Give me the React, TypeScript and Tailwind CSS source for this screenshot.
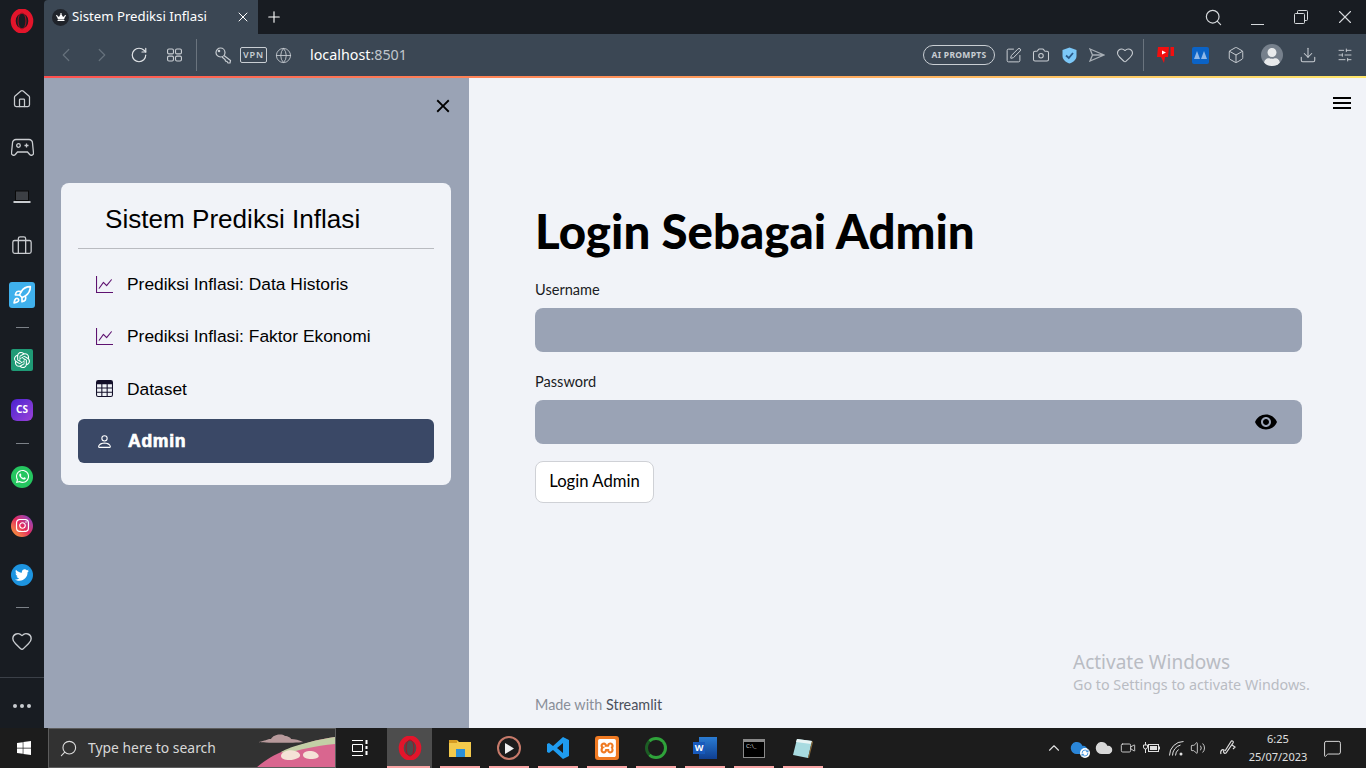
import type { ReactNode } from "react";
import {
  Home,
  Briefcase,
  Rocket,
  Heart,
  ChevronLeft,
  ChevronRight,
  RotateCw,
  Globe,
  Search,
  X,
  Plus,
  Camera,
  Box,
  Download,
  SlidersHorizontal,
  SquarePen,
  ChevronUp,
  Cloud,
  RefreshCw,
  Video,
  Volume2,
  MessageSquare,
} from "lucide-react";
import { BsGraphUp, BsTable, BsPerson } from "react-icons/bs";
import { MdClose, MdMenu, MdVisibility } from "react-icons/md";
import { FaWindows, FaWhatsapp, FaInstagram, FaTwitter, FaUser, FaCrown } from "react-icons/fa";
import { SiOpenai, SiXampp } from "react-icons/si";

const OperaLogo = ({ size = 22 }: { size?: number }) => (
  <svg width={size} height={size} viewBox="0 0 24 24">
    <ellipse cx="12" cy="12" rx="8.8" ry="10" fill="none" stroke="#e3152b" strokeWidth="5" />
    <ellipse cx="12" cy="12" rx="4" ry="8" fill="none" stroke="#a70f20" strokeWidth="1" />
  </svg>
);

const RailDash = () => (
  <div className="h-[16px] flex items-center justify-center">
    <div className="w-[13px] h-px bg-[#7c8188]" />
  </div>
);

const RailItem = ({ children }: { children: ReactNode }) => (
  <div className="h-[49px] flex items-center justify-center text-[#c9ccd0]">{children}</div>
);

const Rail = () => (
  <aside className="w-[44px] shrink-0 bg-[#181c22] flex flex-col">
    <div className="h-[74px] pt-[9px] flex justify-center items-start">
      <OperaLogo size={24} />
    </div>
    <RailItem>
      <Home size={20} strokeWidth={1.5} />
    </RailItem>
    <RailItem>
      <svg width="23" height="20" viewBox="0 0 23 20" fill="none" stroke="currentColor" strokeWidth="1.3">
        <path d="M5 1.500h13a3.500 3.500 0 0 1 3.500 3.500l1 10c.2 2-2.500 3-3.800 1.500L16.500 14h-10l-2.200 2.500C3 18 .3 17 .5 15l1-10A3.500 3.500 0 0 1 5 1.500z" />
        <circle cx="7.500" cy="7.500" r="1.800" />
        <path d="M13.500 7.500h4M15.500 5.500v4" />
      </svg>
    </RailItem>
    <RailItem>
      <svg width="18" height="14" viewBox="0 0 18 14">
        <rect x="2.500" y="1" width="13" height="9.500" fill="#3c3f44" stroke="#0a0a0a" />
        <rect x="0.500" y="11" width="17" height="2" fill="#c9ccd0" />
      </svg>
    </RailItem>
    <RailItem>
      <Briefcase size={22} strokeWidth={1.4} />
    </RailItem>
    <RailItem>
      <div className="w-[26px] h-[26px] rounded-[3px] bg-[#3fb0ec] flex items-center justify-center text-white">
        <Rocket size={20} strokeWidth={2} />
      </div>
    </RailItem>
    <RailDash />
    <RailItem>
      <div className="w-[22px] h-[22px] rounded-[2px] bg-[#1f9a76] flex items-center justify-center text-white">
        <SiOpenai size={16} />
      </div>
    </RailItem>
    <div className="h-px" />
    <RailItem>
      <div className="w-[22px] h-[22px] rounded-[6px] bg-gradient-to-br from-[#4a1fd0] to-[#9b3fd8] flex items-center justify-center text-white text-[10px] font-bold font-['Noto_Sans',sans-serif]">
        CS
      </div>
    </RailItem>
    <div className="h-[18px] flex items-center justify-center">
      <div className="w-[13px] h-px bg-[#7c8188]" />
    </div>
    <RailItem>
      <div className="w-[22px] h-[22px] rounded-full bg-[#25c660] flex items-center justify-center text-white">
        <FaWhatsapp size={15} />
      </div>
    </RailItem>
    <RailItem>
      <div className="w-[22px] h-[22px] rounded-full bg-gradient-to-tr from-[#f9a51a] via-[#e4245c] to-[#7b2fd0] flex items-center justify-center text-white">
        <FaInstagram size={15} />
      </div>
    </RailItem>
    <RailItem>
      <div className="w-[22px] h-[22px] rounded-full bg-[#1d94e0] flex items-center justify-center text-white">
        <FaTwitter size={14} />
      </div>
    </RailItem>
    <RailDash />
    <div className="h-px" />
    <RailItem>
      <Heart size={22} strokeWidth={1.5} />
    </RailItem>
    <div className="mt-auto border-t border-[#3b4048] h-[51px] pt-[6px] flex items-center justify-center gap-[3px]">
      <span className="w-[4px] h-[4px] rounded-full bg-[#c9ccd0]" />
      <span className="w-[4px] h-[4px] rounded-full bg-[#c9ccd0]" />
      <span className="w-[4px] h-[4px] rounded-full bg-[#c9ccd0]" />
    </div>
  </aside>
);

const TabBar = () => (
  <div className="h-[34px] bg-[#181c22] flex text-white font-['Noto_Sans',sans-serif]">
    <div className="w-[214px] bg-[#3b4754] rounded-tl-[4px] flex items-center pl-[8px] pr-[7px]">
      <div className="w-[17px] h-[17px] rounded-full bg-[#20242b] flex items-center justify-center mr-[3px] shrink-0">
        <FaCrown size={10} />
      </div>
      <span className="text-[13.200px] whitespace-nowrap">Sistem Prediksi Inflasi</span>
      <X size={16} strokeWidth={1.5} className="ml-auto" />
    </div>
    <div className="w-[32px] flex items-center justify-center">
      <Plus size={18} strokeWidth={1.5} />
    </div>
    <div className="ml-auto flex items-center text-[#d5d8dc]">
      <div className="w-[44px] flex justify-center">
        <Search size={19} strokeWidth={1.5} />
      </div>
      <div className="w-[44px] flex justify-center pt-[14px]">
        <div className="w-[13px] h-px bg-[#d5d8dc]" />
      </div>
      <div className="w-[44px] flex justify-center">
        <svg width="14" height="14" viewBox="0 0 14 14" fill="none" stroke="currentColor">
          <rect x="0.500" y="3.500" width="10" height="10" rx="1" />
          <path d="M3.500 3V1.500a1 1 0 0 1 1-1h8a1 1 0 0 1 1 1v8a1 1 0 0 1-1 1H11" />
        </svg>
      </div>
      <div className="w-[43px] flex justify-center">
        <X size={22} strokeWidth={1.2} />
      </div>
    </div>
  </div>
);

const ToolIcon = ({ w = 28, children }: { w?: number; children: ReactNode }) => (
  <div style={{ width: w }} className="flex items-center justify-center shrink-0">
    {children}
  </div>
);

const Toolbar = () => (
  <div className="h-[42px] bg-[#3b4754] flex items-center text-[#c9ced3] font-['Noto_Sans',sans-serif]">
    <div className="w-[4px]" />
    <ToolIcon w={36}>
      <ChevronLeft size={22} strokeWidth={1.3} className="text-[#66717c]" />
    </ToolIcon>
    <ToolIcon w={36}>
      <ChevronRight size={22} strokeWidth={1.3} className="text-[#66717c]" />
    </ToolIcon>
    <ToolIcon w={37}>
      <RotateCw size={18} strokeWidth={1.6} className="text-[#dfe2e5]" />
    </ToolIcon>
    <ToolIcon w={34}>
      <svg width="15" height="14" viewBox="0 0 16 14" fill="none" stroke="currentColor" strokeWidth="1.2">
        <rect x="0.600" y="0.600" width="6.300" height="5.200" rx="1.500" />
        <rect x="9.100" y="0.600" width="6.300" height="5.200" rx="1.500" />
        <rect x="0.600" y="8.200" width="6.300" height="5.200" rx="1.500" />
        <rect x="9.100" y="8.200" width="6.300" height="5.200" rx="1.500" />
      </svg>
    </ToolIcon>
    <div className="w-px h-[32px] bg-[#6a747e] ml-[5px] mr-[14px]" />
    <ToolIcon w={24}>
      <svg width="17" height="17" viewBox="0 0 17 17" fill="none" stroke="currentColor" strokeWidth="1.2">
        <circle cx="5.500" cy="5.500" r="4.500" />
        <path d="M9 8.500l6.500 5-.5 2.500h-2l-1-1.500-1.500-.5-.5-1.500-3-2.500" />
        <circle cx="4" cy="4" r=".7" />
      </svg>
    </ToolIcon>
    <div className="w-[27px] h-[16px] ml-[5px] border border-[#c9ced3] rounded-[2px] flex items-center justify-center text-[9px] font-semibold tracking-[0.8px]">
      VPN
    </div>
    <ToolIcon w={32}>
      <Globe size={17} strokeWidth={1.2} />
    </ToolIcon>
    <div className="ml-[11px] text-[14.300px] text-white">
      localhost<span className="text-[#c0c6cc]">:8501</span>
    </div>
    <div className="ml-auto flex items-center">
      <div className="w-[72px] h-[20px] rounded-full border border-[#c9ced3] flex items-center justify-center text-[8.500px] font-bold tracking-[0.3px] mr-[4px]">
        AI PROMPTS
      </div>
      <ToolIcon>
        <SquarePen size={17} strokeWidth={1.4} />
      </ToolIcon>
      <ToolIcon>
        <Camera size={18} strokeWidth={1.4} />
      </ToolIcon>
      <ToolIcon>
        <svg width="15" height="17" viewBox="0 0 15 17">
          <path d="M7.500 0.500 14.500 3v6c0 3.500-3 6.200-7 7.500C3.500 15.200.5 12.500.5 9V3z" fill="#7cc8f8" />
          <path d="M4 8.500 6.800 11 11 6" fill="none" stroke="#2b5a88" strokeWidth="1.800" />
        </svg>
      </ToolIcon>
      <ToolIcon>
        <svg width="16" height="14" viewBox="0 0 16 14" fill="none" stroke="#a8afb6" strokeWidth="1.300">
          <path d="M1 1l14 6-14 6 2.500-6zM3.500 7H15" />
        </svg>
      </ToolIcon>
      <ToolIcon>
        <Heart size={18} strokeWidth={1.4} />
      </ToolIcon>
      <div className="w-px h-[32px] bg-[#6a747e] ml-[4px] mr-[4px]" />
      <ToolIcon w={35}>
        <svg width="18" height="18" viewBox="0 0 18 18">
          <path d="M1 1h11l-1 10H8l-1 6-3-6H0z" fill="#f20f0f" />
          <rect x="13.500" y="1" width="3.500" height="9" fill="#f20f0f" />
          <path d="M5 4.500 9 6.500 5 8.500z" fill="#fff" />
        </svg>
      </ToolIcon>
      <ToolIcon w={35}>
        <div className="w-[17px] h-[17px] rounded-[2px] bg-[#0b63c6] flex items-center justify-center">
          <svg width="13" height="8" viewBox="0 0 13 8" fill="#8fb8e8">
            <path d="M0 8 3 0l3 8zM7 8l3-8 3 8z" />
          </svg>
        </div>
      </ToolIcon>
      <ToolIcon w={36}>
        <Box size={18} strokeWidth={1.3} />
      </ToolIcon>
      <ToolIcon w={36}>
        <div className="w-[22px] h-[22px] rounded-full bg-[#76808c] overflow-hidden flex items-end justify-center text-[#e8eaec]">
          <FaUser size={18} />
        </div>
      </ToolIcon>
      <ToolIcon w={36}>
        <Download size={18} strokeWidth={1.4} />
      </ToolIcon>
      <ToolIcon w={37}>
        <SlidersHorizontal size={16} strokeWidth={1.4} />
      </ToolIcon>
      <div className="w-[3px]" />
    </div>
  </div>
);

const navItems = [
  { label: "Prediksi Inflasi: Data Historis", icon: <BsGraphUp size={17} className="text-[#5e1270]" /> },
  { label: "Prediksi Inflasi: Faktor Ekonomi", icon: <BsGraphUp size={17} className="text-[#5e1270]" /> },
  { label: "Dataset", icon: <BsTable size={17} className="text-[#14102a]" /> },
];

const Sidebar = () => (
  <aside className="w-[425px] shrink-0 bg-[#9aa3b5] flex flex-col font-['Liberation_Sans',sans-serif]">
    <div className="h-[105px] flex justify-end pt-[17px] pr-[15px]">
      <MdClose size={22} className="text-black" />
    </div>
    <div className="ml-[17px] w-[390px] h-[302px] bg-[#f1f3f8] rounded-[8px] px-[17px] pt-[16px]">
      <div className="pl-[27px] text-[26.100px] leading-[40px] text-black whitespace-nowrap">Sistem Prediksi Inflasi</div>
      <div className="mt-[9px] h-px bg-[#b9bbc0]" />
      <div className="mt-[13px] flex flex-col gap-[8.400px]">
        {navItems.map((item) => (
          <div key={item.label} className="h-[44px] flex items-center pl-[18px] text-black text-[17.400px]">
            <span className="w-[31px] flex">{item.icon}</span>
            {item.label}
          </div>
        ))}
        <div className="h-[44px] flex items-center pl-[18px] pt-[1px] rounded-[6px] bg-[#3a4866] text-white text-[17.600px] font-bold tracking-[0.7px] [-webkit-text-stroke:0.7px_white]">
          <span className="w-[32px] flex">
            <BsPerson size={17} />
          </span>
          Admin
        </div>
      </div>
    </div>
  </aside>
);

const MainArea = () => (
  <main className="relative flex-1 bg-[#f1f3f8] flex flex-col pl-[66px] pr-[64px] font-['Lato',sans-serif] text-black">
    <div className="absolute top-[13px] right-[12px]">
      <MdMenu size={24} />
    </div>
    <h1 className="mt-[125px] text-[47.400px] leading-[56px] font-black whitespace-nowrap">Login Sebagai Admin</h1>
    <label className="mt-[21px] text-[14.600px] leading-[20px] text-[#1a1c24]">Username</label>
    <div className="mt-[8px] h-[44px] rounded-[8px] bg-[#9aa3b5]" />
    <label className="mt-[20px] text-[14.600px] leading-[20px] text-[#1a1c24]">Password</label>
    <div className="mt-[8px] h-[44px] rounded-[8px] bg-[#9aa3b5] flex items-center justify-end pr-[24px]">
      <MdVisibility size={24} />
    </div>
    <button className="mt-[17px] w-[119px] h-[42px] rounded-[8px] border border-[#cfd1d6] bg-white text-[16.700px]">
      Login Admin
    </button>
    <div className="mt-auto mb-[13px] text-[14.400px] leading-[20px] text-[#8a8f99]">
      Made with <span className="text-[#4a505c]">Streamlit</span>
    </div>
    <div className="absolute left-[604px] top-[571px] text-[#b9bcc3] font-['Noto_Sans',sans-serif] whitespace-nowrap pointer-events-none">
      <div className="text-[19px] leading-[26px]">Activate Windows</div>
      <div className="text-[14.300px] leading-[20px]">Go to Settings to activate Windows.</div>
    </div>
  </main>
);

const TaskApp = ({ children }: { children: ReactNode }) => (
  <div className="w-[49px] h-full shrink-0 pr-[9px]">
    <div className="h-full relative flex items-center justify-center">
      {children}
      <div className="absolute bottom-0 inset-x-0 h-[2px] bg-[#f9a5a5]" />
    </div>
  </div>
);

const Taskbar = () => (
  <footer className="h-[40px] bg-[#1c1c1c] flex items-center text-white font-['Noto_Sans',sans-serif]">
    <div className="w-[48px] flex justify-center">
      <FaWindows size={16} />
    </div>
    <div className="w-[288px] h-[40px] bg-[#323232] border border-[#5c5c5c] flex items-center pl-[10px] relative overflow-hidden">
      <Search size={19} strokeWidth={1.4} className="-scale-x-100 text-[#dcdcdc]" />
      <span className="ml-[10px] pt-[1px] text-[13.900px] text-[#d8d8d8]">Type here to search</span>
      <svg className="absolute right-0 top-0" width="80" height="40" viewBox="0 0 80 40">
        <path d="M0 40C8 32 22 24 34 20S62 10 80 8V40z" fill="#d9668f" />
        <path d="M26 23c10-6 34-12 54-15v7c-20 2-38 6-48 10z" fill="#c3cfa6" />
        <path d="M26 27c0-4 8-7 14-5 5 1 7 5 3 7-5 3-17 3-17-2z" fill="#f5e2d6" />
        <path d="M48 26c0-4 8-5 12-3s5 5 2 6c-5 2-14 1-14-3z" fill="#f5e2d6" />
        <path d="M4 13c6-1 8-3 12-3 2-4 10-6 14-3 3 0 6 2 6 3 4 0 8 1 12 3 0 1-44 1-44 0z" fill="#b89a9c" />
      </svg>
    </div>
    <div className="w-[51px] flex justify-center pr-[4px]">
      <svg width="16" height="16" viewBox="0 0 16 16" fill="none" stroke="#fff">
        <path d="M0 .5h11M0 15.500h11M.5 4.500h10v7H.5z" />
        <path d="M14.500 0v4M14.500 6v3M14.500 11v4" strokeWidth="2" />
      </svg>
    </div>
    <div className="w-[45px] h-full bg-[#4d4d4d] relative flex items-center justify-center">
      <OperaLogo size={24} />
      <div className="absolute bottom-0 left-0 right-[2px] h-[2px] bg-[#f9a5a5]" />
    </div>
    <div className="w-[8px]" />
    <TaskApp>
      <svg width="22" height="18" viewBox="0 0 22 18">
        <path d="M0 1h8l2 2h12v15H0z" fill="#f2c94c" />
        <rect x="0" y="1" width="8" height="3" fill="#d59b22" />
        <rect x="7" y="10" width="9" height="8" fill="#2a8fd8" />
      </svg>
    </TaskApp>
    <TaskApp>
      <div className="w-[24px] h-[24px] rounded-full border-[2px] border-[#c77a6a] flex items-center justify-center">
        <svg width="9" height="11" viewBox="0 0 9 11">
          <path d="M0 0l9 5.500-9 5.500z" fill="#f0f0f0" />
        </svg>
      </div>
    </TaskApp>
    <TaskApp>
      <svg width="24" height="24" viewBox="0 0 24 24">
        <path d="M17 1 23 4v16l-6 3-10-9-4 3-2-1V8l2-1 4 3zM17 7l-6 5 6 5z" fill="#1f9cf0" fillRule="evenodd" />
      </svg>
    </TaskApp>
    <TaskApp>
      <div className="w-[24px] h-[24px] rounded-[3px] bg-[#f07a22] flex items-center justify-center text-white">
        <SiXampp size={18} />
      </div>
    </TaskApp>
    <TaskApp>
      <div className="w-[22px] h-[22px] rounded-full border-[3px] border-[#2fa33a] border-l-[#1d5e25]" />
    </TaskApp>
    <TaskApp>
      <div className="relative w-[24px] h-[22px]">
        <div className="absolute right-0 top-0 w-[18px] h-[22px] bg-gradient-to-b from-[#2b7cd3] to-[#103f91]" />
        <div className="absolute left-0 top-[5px] w-[12px] h-[12px] bg-[#185abd] flex items-center justify-center text-[9px] font-bold text-white">
          W
        </div>
      </div>
    </TaskApp>
    <TaskApp>
      <div className="w-[22px] h-[19px] bg-black border border-[#8a8a8a] border-t-[3px] text-[6px] leading-[8px] pl-[2px] text-[#ccc]">
        C:\_
      </div>
    </TaskApp>
    <TaskApp>
      <svg width="22" height="22" viewBox="0 0 22 22">
        <path d="M5 2 20 4 16 21 1 18z" fill="#a8dbe0" />
        <path d="M5 2 20 4 19 7 4 5z" fill="#e8f4f4" />
        <path d="M20 4l1 1-4 16h-1z" fill="#8a6a3a" />
      </svg>
    </TaskApp>
    <div className="ml-auto flex items-center h-full text-[#e0e0e0]">
      <ChevronUp size={18} strokeWidth={1.5} />
      <div className="w-[7px]" />
      <div className="relative">
        <Cloud size={18} fill="#2b86d8" stroke="#2b86d8" />
        <div className="absolute -right-[2px] -bottom-[1px] w-[10px] h-[10px] rounded-full bg-white flex items-center justify-center text-[#2b86d8]">
          <RefreshCw size={8} strokeWidth={2.5} />
        </div>
      </div>
      <div className="w-[7px]" />
      <Cloud size={18} fill="#d8d8d8" stroke="#d8d8d8" />
      <div className="w-[7px]" />
      <Video size={16} strokeWidth={1.3} />
      <div className="w-[7px]" />
      <svg width="17" height="12" viewBox="0 0 17 12" fill="none" stroke="#e0e0e0">
        <rect x="5.500" y="2.500" width="10" height="7" />
        <rect x="7" y="4" width="7" height="4" fill="#e0e0e0" stroke="none" />
        <path d="M16.500 4.500v3M2.500 0v3M.5 3h4v2a2 2 0 0 1-4 0zM2.500 7v4" />
      </svg>
      <div className="w-[9px]" />
      <svg width="15" height="15" viewBox="0 0 15 15" fill="none" stroke="#e0e0e0" strokeWidth="1">
        <path d="M.5 14.500a14 14 0 0 1 14-14M3.500 14.500a11 11 0 0 1 8-10.500M6.500 14.500a8 8 0 0 1 3-6" />
        <circle cx="12" cy="13" r="1.500" fill="#e0e0e0" stroke="none" />
      </svg>
      <div className="w-[6px]" />
      <Volume2 size={16} strokeWidth={1.3} />
      <div className="w-[14px]" />
      <svg width="16" height="16" viewBox="0 0 16 16" fill="none" stroke="#e0e0e0" strokeWidth="1.200">
        <path d="M1 14c-1-3 1-5 3-4-1 2 0 4 2 3L13 3c1-1.500-1-3-2-1.500L5 11M12 5l3 2-2 2" />
      </svg>
      <div className="w-[58px] ml-[13px] flex flex-col items-center text-[11px] leading-[18px] whitespace-nowrap">
        <span>6:25</span>
        <span>25/07/2023</span>
      </div>
      <div className="w-[16px]" />
      <MessageSquare size={19} strokeWidth={1.2} />
      <div className="w-[24px]" />
    </div>
  </footer>
);

const App = () => {
  return (
    <div className="w-[1366px] h-[768px] overflow-hidden flex flex-col">
      <div className="flex h-[728px]">
        <Rail />
        <div className="flex-1 flex flex-col min-w-0">
          <TabBar />
          <Toolbar />
          <div className="h-[2px] bg-gradient-to-r from-[#ff4f4f] via-[#ff9a5a] to-[#ffe76a]" />
          <div className="flex-1 flex min-h-0">
            <Sidebar />
            <MainArea />
          </div>
        </div>
      </div>
      <Taskbar />
    </div>
  );
};

export default App;
